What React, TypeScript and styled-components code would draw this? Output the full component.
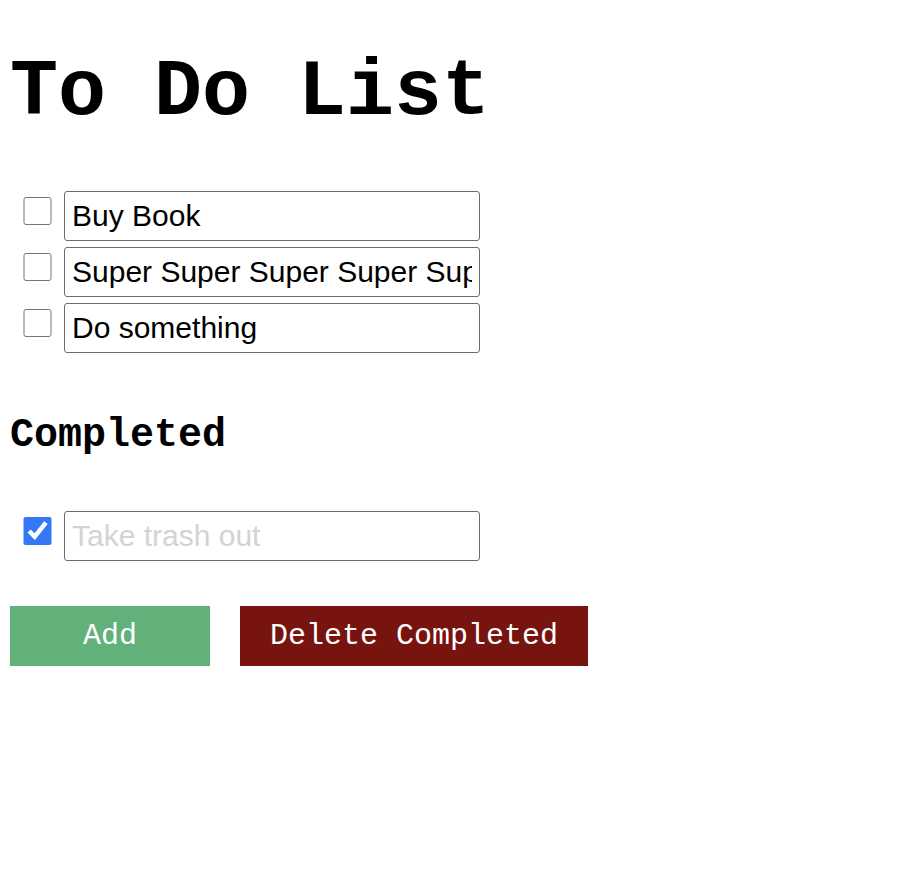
import React from "react";
import styled, { createGlobalStyle } from "styled-components";

const GlobalStyle = createGlobalStyle`
  html, body { margin: 0; padding: 0; background: #fff; }
  body { font-family: "Liberation Mono", "Courier New", monospace; }
`;

const Page = styled.div`
  display: flex;
  flex-direction: column;
  align-items: flex-start;
  padding: 0 10px;
`;

const Title = styled.h1`
  margin: 47px 0 53px;
  font-family: "Liberation Mono", "Courier New", monospace;
  font-weight: bold;
  font-size: 80px;
  line-height: normal;
  color: #000;
`;

const SectionTitle = styled.h2`
  margin: 60px 0 53px;
  font-family: "Liberation Mono", "Courier New", monospace;
  font-weight: bold;
  font-size: 40px;
  line-height: normal;
  color: #000;
`;

const List = styled.ul`
  list-style: none;
  margin: 0;
  padding: 0;
  display: flex;
  flex-direction: column;
  gap: 6px;
`;

const Row = styled.li`
  display: flex;
  align-items: flex-start;
  gap: 12px;
  padding-left: 13px;
`;

const Check = styled.input.attrs({ type: "checkbox" })`
  width: 29px;
  height: 28px;
  margin: 6px 0 0;
  accent-color: #3478f6;
  flex: none;
`;

const TaskInput = styled.input<{ $done?: boolean }>`
  box-sizing: border-box;
  width: 416px;
  height: 50px;
  padding: 0 7px;
  border: 1px solid #6e6e6e;
  border-radius: 3px;
  font-family: "Liberation Sans", Arial, sans-serif;
  font-size: 30px;
  color: ${(p) => (p.$done ? "#d3d3d3" : "#000")};
  background: #fff;
  outline: none;
`;

const Actions = styled.div`
  display: flex;
  gap: 30px;
  margin-top: 45px;
`;

const Button = styled.button<{ $variant: "add" | "delete" }>`
  box-sizing: border-box;
  min-width: 200px;
  height: 60px;
  padding: 0 30px;
  border: none;
  border-radius: 0;
  font-family: "Liberation Mono", "Courier New", monospace;
  font-size: 30px;
  color: #fff;
  background: ${(p) => (p.$variant === "add" ? "#62b17a" : "#77140f")};
  cursor: pointer;
`;

const todos = ["Buy Book", "Super Super Super Super Super Super", "Do something"];
const done = ["Take trash out"];

export default function App() {
  return (
    <>
      <GlobalStyle />
      <Page>
        <Title>To Do List</Title>
        <List>
          {todos.map((t) => (
            <Row key={t}>
              <Check />
              <TaskInput defaultValue={t} />
            </Row>
          ))}
        </List>
        <SectionTitle>Completed</SectionTitle>
        <List>
          {done.map((t) => (
            <Row key={t}>
              <Check defaultChecked />
              <TaskInput $done defaultValue={t} />
            </Row>
          ))}
        </List>
        <Actions>
          <Button $variant="add">Add</Button>
          <Button $variant="delete">Delete Completed</Button>
        </Actions>
      </Page>
    </>
  );
}
